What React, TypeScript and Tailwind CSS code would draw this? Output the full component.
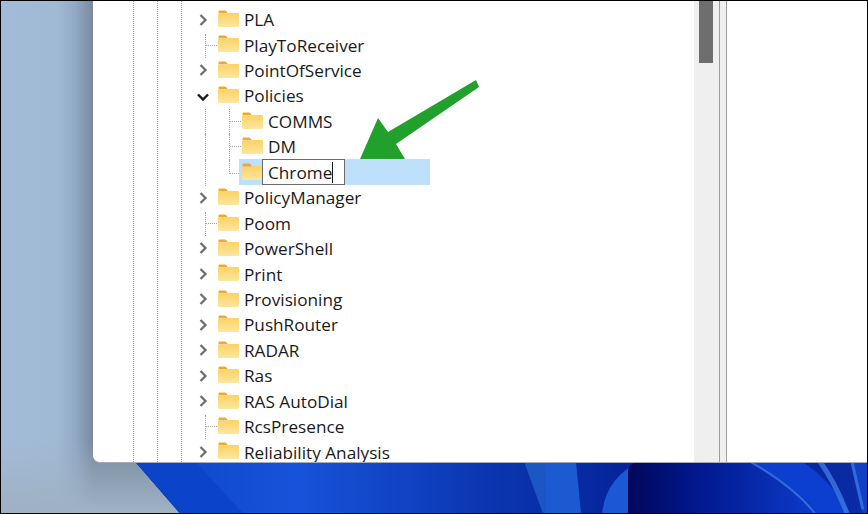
import React from 'react';

type Row = { name: string; kind: 'closed' | 'open' | 'leaf' | 'child' | 'edit' };

const ROWS: Row[] = [
  { name: 'PLA', kind: 'closed' },
  { name: 'PlayToReceiver', kind: 'leaf' },
  { name: 'PointOfService', kind: 'closed' },
  { name: 'Policies', kind: 'open' },
  { name: 'COMMS', kind: 'child' },
  { name: 'DM', kind: 'child' },
  { name: 'Chrome', kind: 'edit' },
  { name: 'PolicyManager', kind: 'closed' },
  { name: 'Poom', kind: 'leaf' },
  { name: 'PowerShell', kind: 'closed' },
  { name: 'Print', kind: 'closed' },
  { name: 'Provisioning', kind: 'closed' },
  { name: 'PushRouter', kind: 'closed' },
  { name: 'RADAR', kind: 'closed' },
  { name: 'Ras', kind: 'closed' },
  { name: 'RAS AutoDial', kind: 'closed' },
  { name: 'RcsPresence', kind: 'leaf' },
  { name: 'Reliability Analysis', kind: 'closed' },
];

function Folder() {
  return (
    <svg width="21" height="17" viewBox="0 0 21 17" className="shrink-0 mb-[3px] relative">
      <defs>
        <linearGradient id="folderBody" x1="0" y1="0" x2="0" y2="1">
          <stop offset="0" stopColor="#fbd264" />
          <stop offset="1" stopColor="#fde6a0" />
        </linearGradient>
      </defs>
      <path d="M0.5 1.5 Q0.5 0.5 1.5 0.5 H7 Q8 0.5 9 2 L10 3.5 H0.5 Z" fill="#eeaa2e" />
      <path d="M0 4 H9 L10 3 H20 Q21 3 21 4 V16 Q21 17 20 17 H1 Q0 17 0 16 Z" fill="url(#folderBody)" />
    </svg>
  );
}

function Chevron({ open }: { open: boolean }) {
  if (open) {
    return (
      <svg width="14" height="10" viewBox="0 0 14 10" className="mt-[1px]">
        <path d="M2 2.5 L7 7.5 L12 2.5" fill="none" stroke="#1a1a1a" strokeWidth="2.4" />
      </svg>
    );
  }
  return (
    <svg width="10" height="14" viewBox="0 0 10 14" className="mb-[1px]">
      <path d="M2.5 2 L7.5 7 L2.5 12" fill="none" stroke="#6f6f6f" strokeWidth="2.3" />
    </svg>
  );
}

function TreeRow({ row }: { row: Row }) {
  const nested = row.kind === 'child' || row.kind === 'edit';
  return (
    <div className="relative flex items-center h-[25.45px]">
      {row.kind === 'edit' && (
        <div className="absolute left-[146px] top-[-1.3px] h-[26px] w-[191px] bg-[#bfe0fb]" />
      )}
      {row.kind === 'leaf' && (
        <>
          <div className="absolute left-[112px] top-[1px] h-[24px] border-l border-dotted border-[#a0a0a0]" />
          <div className="absolute left-[113px] top-[12px] w-[11px] border-t border-dotted border-[#a0a0a0]" />
        </>
      )}
      {row.kind === 'child' && (
        <>
          <div className="absolute left-[112px] top-0 h-full border-l border-dotted border-[#a0a0a0]" />
          <div className="absolute left-[136px] top-0 h-full border-l border-dotted border-[#a0a0a0]" />
          <div className="absolute left-[137px] top-[12px] w-[11px] border-t border-dotted border-[#a0a0a0]" />
        </>
      )}
      {row.kind === 'edit' && (
        <>
          <div className="absolute left-[112px] top-0 h-[26px] border-l border-dotted border-[#a0a0a0]" />
          <div className="absolute left-[136px] top-0 h-[14px] border-l border-dotted border-[#a0a0a0]" />
          <div className="absolute left-[137px] top-[13px] w-[9px] border-t border-dotted border-[#a0a0a0]" />
        </>
      )}
      <div className={nested ? 'w-[149px] shrink-0' : 'relative w-[125px] shrink-0 flex justify-end pr-[8px]'}>
        {row.kind === 'closed' && (
          <div className="flex justify-center w-[14px] bg-white">
            <Chevron open={false} />
          </div>
        )}
        {row.kind === 'open' && (
          <div className="flex justify-center w-[14px] bg-white">
            <Chevron open />
          </div>
        )}
      </div>
      <Folder />
      {row.kind === 'edit' ? (
        <div className="relative ml-[-1px] mb-[2px] pt-[2px] flex items-center h-[26px] w-[83px] bg-white border border-[#6b6b6b] pl-[5px] text-[17.2px] text-[#1a1a1a]">
          {row.name}
          <span className="w-px h-[21px] bg-[#1a1a1a]" />
        </div>
      ) : (
        <span className="relative ml-[5px] whitespace-nowrap text-[17.2px] text-[#1a1a1a]">{row.name}</span>
      )}
    </div>
  );
}

function Wallpaper() {
  return (
    <svg className="absolute inset-0 w-full h-full" viewBox="1 1 866 512" preserveAspectRatio="none">
      <defs>
        <linearGradient id="sky" gradientUnits="userSpaceOnUse" x1="0" y1="0" x2="94" y2="0">
          <stop offset="0" stopColor="#a2bcd8" />
          <stop offset="0.6" stopColor="#a0bad4" />
          <stop offset="0.8" stopColor="#91a9c4" />
          <stop offset="1" stopColor="#76889c" />
        </linearGradient>
        <linearGradient id="floorFade" gradientUnits="userSpaceOnUse" x1="0" y1="440" x2="0" y2="510">
          <stop offset="0" stopColor="#9fb1c4" stopOpacity="0" />
          <stop offset="1" stopColor="#9fb1c4" stopOpacity="1" />
        </linearGradient>
        <linearGradient id="blue" gradientUnits="userSpaceOnUse" x1="135" y1="0" x2="868" y2="0">
          <stop offset="0" stopColor="#0b43c6" />
          <stop offset="0.22" stopColor="#1753da" />
          <stop offset="0.5" stopColor="#0a34ae" />
          <stop offset="0.75" stopColor="#031c92" />
          <stop offset="1" stopColor="#0a2ca6" />
        </linearGradient>
        <linearGradient id="deep" gradientUnits="userSpaceOnUse" x1="628" y1="0" x2="818" y2="0">
          <stop offset="0" stopColor="#00085a" />
          <stop offset="0.35" stopColor="#02178c" />
          <stop offset="1" stopColor="#0c3ccb" />
        </linearGradient>
      </defs>
      <rect x="0" y="0" width="94" height="514" fill="url(#sky)" />
      <path d="M94 440 H135 V462 L180 514 H94 Z" fill="#76889c" />
      <path d="M0 440 H135 V462 L180 514 H0 Z" fill="url(#floorFade)" />
      <path d="M135 462 H868 V514 H180 Z" fill="url(#blue)" />
      <path d="M135 462 H195 L243 514 H180 Z" fill="#0b44c8" />
      <path d="M524 462 H547 L546 514 H543 Z" fill="#2060cc" opacity="0.8" />
      <path d="M545 462 H576 L581 514 H546 Z" fill="#1c5ad2" />
      <path d="M602 514 Q606 478 640 462 H720 V514 Z" fill="#1a58d6" />
      <path d="M628 514 V472 Q628 462 644 462 H750 Q800 490 818 514 Z" fill="url(#deep)" />
      <path d="M750 462 Q800 490 818 514 H850 Q830 480 802 462 Z" fill="#0c3ecf" />
      <path d="M750 462 Q795 488 815 514" fill="none" stroke="#3c78e0" strokeWidth="2" opacity="0.8" />
      <path d="M820 462 Q836 485 847 514" fill="none" stroke="#3c78e0" strokeWidth="5" opacity="0.8" />
      <path d="M850 462 L862 514 H867 V462 Z" fill="#1240c0" />
      <path d="M852 462 L863 510" fill="none" stroke="#3a74de" strokeWidth="3" opacity="0.8" />
    </svg>
  );
}

function App() {
  return (
    <div className="w-[868px] h-[514px] overflow-hidden bg-black pt-px px-px pb-[1.5px] font-['Open_Sans','Noto_Sans',sans-serif]">
      <div className="relative w-full h-full overflow-hidden">
        <Wallpaper />
        <div className="relative ml-[92px] flex h-[462px] overflow-hidden rounded-bl-[7px] border-b border-[#a9adb2] bg-white">
          {/* registry tree */}
          <div className="relative w-[601px] shrink-0 overflow-hidden pt-[6.3px]">
            <div className="absolute left-[40px] top-0 bottom-0 border-l border-dotted border-[#999999]" />
            <div className="absolute left-[64px] top-0 bottom-0 border-l border-dotted border-[#999999]" />
            <div className="absolute left-[88px] top-0 bottom-0 border-l border-dotted border-[#999999]" />
            {ROWS.map((r) => (
              <TreeRow key={r.name} row={r} />
            ))}
          </div>
          {/* scrollbar */}
          <div className="w-[25px] shrink-0 bg-[#efefef] pl-[5px]">
            <div className="w-[14px] h-[62px] bg-[#6e6e6e]" />
          </div>
          {/* splitter */}
          <div className="w-[8px] shrink-0 bg-[#f0f0f0] border-x border-[#9c9c9c]" />
          <div className="flex-1 bg-white" />
          {/* arrow */}
          <svg className="absolute left-0 top-0 pointer-events-none" width="500" height="170" viewBox="92 0 500 170">
            <path d="M475 79 L478 86 L395 143 L404 158 L359 158 L377 117 L387 131 Z" fill="#22a02c" />
          </svg>
        </div>
      </div>
    </div>
  );
}

export default App;
